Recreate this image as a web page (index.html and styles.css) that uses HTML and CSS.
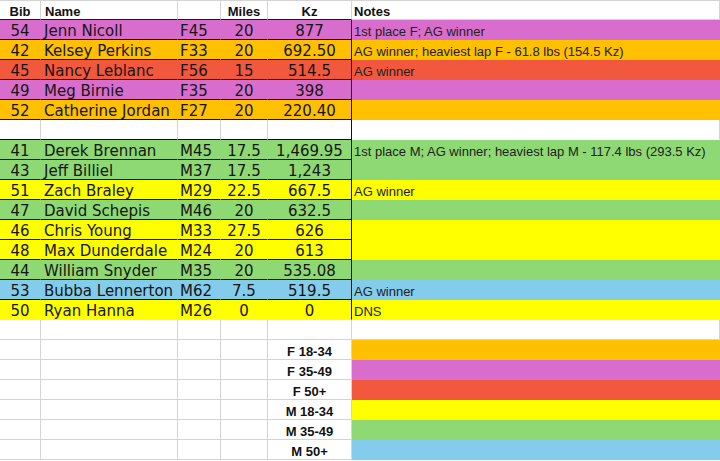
FILE: index.html
```html
<!DOCTYPE html>
<html lang="en">
<head>
<meta charset="utf-8">
<title>Race results</title>
<link rel="stylesheet" href="styles.css">
</head>
<body>
<div class="sheet">
  <div class="row head">
    <div class="cell bib">Bib</div><div class="cell name">Name</div><div class="cell age"></div><div class="cell num">Miles</div><div class="cell kz">Kz</div><div class="cell note">Notes</div>
  </div>

  <div class="row data mag">
    <div class="cell bib">54</div><div class="cell name">Jenn Nicoll</div><div class="cell age">F45</div><div class="cell num">20</div><div class="cell kz">877</div><div class="cell note">1st place F; AG winner</div>
  </div>
  <div class="row data org">
    <div class="cell bib">42</div><div class="cell name">Kelsey Perkins</div><div class="cell age">F33</div><div class="cell num">20</div><div class="cell kz">692.50</div><div class="cell note">AG winner; heaviest lap F - 61.8 lbs (154.5 Kz)</div>
  </div>
  <div class="row data red">
    <div class="cell bib">45</div><div class="cell name">Nancy Leblanc</div><div class="cell age">F56</div><div class="cell num">15</div><div class="cell kz">514.5</div><div class="cell note">AG winner</div>
  </div>
  <div class="row data mag">
    <div class="cell bib">49</div><div class="cell name">Meg Birnie</div><div class="cell age">F35</div><div class="cell num">20</div><div class="cell kz">398</div><div class="cell note"></div>
  </div>
  <div class="row data org">
    <div class="cell bib">52</div><div class="cell name">Catherine Jordan</div><div class="cell age">F27</div><div class="cell num">20</div><div class="cell kz">220.40</div><div class="cell note"></div>
  </div>

  <div class="row gap">
    <div class="cell bib"></div><div class="cell name"></div><div class="cell age"></div><div class="cell num"></div><div class="cell kz"></div><div class="cell note"></div>
  </div>

  <div class="row data grn">
    <div class="cell bib">41</div><div class="cell name">Derek Brennan</div><div class="cell age">M45</div><div class="cell num">17.5</div><div class="cell kz">1,469.95</div><div class="cell note">1st place M; AG winner; heaviest lap M - 117.4 lbs (293.5 Kz)</div>
  </div>
  <div class="row data grn">
    <div class="cell bib">43</div><div class="cell name">Jeff Billiel</div><div class="cell age">M37</div><div class="cell num">17.5</div><div class="cell kz">1,243</div><div class="cell note"></div>
  </div>
  <div class="row data yel">
    <div class="cell bib">51</div><div class="cell name">Zach Braley</div><div class="cell age">M29</div><div class="cell num">22.5</div><div class="cell kz">667.5</div><div class="cell note">AG winner</div>
  </div>
  <div class="row data grn">
    <div class="cell bib">47</div><div class="cell name">David Schepis</div><div class="cell age">M46</div><div class="cell num">20</div><div class="cell kz">632.5</div><div class="cell note"></div>
  </div>
  <div class="row data yel">
    <div class="cell bib">46</div><div class="cell name">Chris Young</div><div class="cell age">M33</div><div class="cell num">27.5</div><div class="cell kz">626</div><div class="cell note"></div>
  </div>
  <div class="row data yel">
    <div class="cell bib">48</div><div class="cell name">Max Dunderdale</div><div class="cell age">M24</div><div class="cell num">20</div><div class="cell kz">613</div><div class="cell note"></div>
  </div>
  <div class="row data grn">
    <div class="cell bib">44</div><div class="cell name">William Snyder</div><div class="cell age">M35</div><div class="cell num">20</div><div class="cell kz">535.08</div><div class="cell note"></div>
  </div>
  <div class="row data blu">
    <div class="cell bib">53</div><div class="cell name">Bubba Lennerton</div><div class="cell age">M62</div><div class="cell num">7.5</div><div class="cell kz">519.5</div><div class="cell note">AG winner</div>
  </div>
  <div class="row data yel last">
    <div class="cell bib">50</div><div class="cell name">Ryan Hanna</div><div class="cell age">M26</div><div class="cell num">0</div><div class="cell kz">0</div><div class="cell note">DNS</div>
  </div>

  <div class="row plain">
    <div class="cell bib"></div><div class="cell name"></div><div class="cell age"></div><div class="cell num"></div><div class="cell kz"></div><div class="cell note"></div>
  </div>

  <div class="row legend org">
    <div class="cell bib"></div><div class="cell name"></div><div class="cell age"></div><div class="cell num"></div><div class="cell kz">F 18-34</div><div class="cell note"></div>
  </div>
  <div class="row legend mag">
    <div class="cell bib"></div><div class="cell name"></div><div class="cell age"></div><div class="cell num"></div><div class="cell kz">F 35-49</div><div class="cell note"></div>
  </div>
  <div class="row legend red">
    <div class="cell bib"></div><div class="cell name"></div><div class="cell age"></div><div class="cell num"></div><div class="cell kz">F 50+</div><div class="cell note"></div>
  </div>
  <div class="row legend yel">
    <div class="cell bib"></div><div class="cell name"></div><div class="cell age"></div><div class="cell num"></div><div class="cell kz">M 18-34</div><div class="cell note"></div>
  </div>
  <div class="row legend grn">
    <div class="cell bib"></div><div class="cell name"></div><div class="cell age"></div><div class="cell num"></div><div class="cell kz">M 35-49</div><div class="cell note"></div>
  </div>
  <div class="row legend blu">
    <div class="cell bib"></div><div class="cell name"></div><div class="cell age"></div><div class="cell num"></div><div class="cell kz">M 50+</div><div class="cell note"></div>
  </div>
</div>
</body>
</html>
```

FILE: styles.css
```css
html, body {
  margin: 0;
  padding: 0;
  background: #ffffff;
}

.sheet {
  width: 720px;
  font-family: "Liberation Sans", Arial, sans-serif;
  color: #1a1a1a;
}

.row {
  display: grid;
  grid-template-columns: 41px 137px 43px 47px 84px 368px;
  height: 20px;
}

.cell {
  box-sizing: border-box;
  height: 20px;
  border-right: 1px solid #d4d4d4;
  border-bottom: 1px solid #d4d4d4;
  white-space: nowrap;
  overflow: visible;
  font-size: 13px;
  line-height: 23px;
}

.bib { text-align: center; }
.name { padding-left: 3px; }
.age { padding-left: 2px; }
.num, .kz { text-align: center; }
.note { padding-left: 2px; }

/* header */
.head .cell {
  border-top: 1px solid #d4d4d4;
  font-weight: bold;
  line-height: 21px;
  color: #111;
}
.head .name { padding-left: 4px; }
.head .cell.kz { border-bottom-color: #1a1a1a; }
.head .bib, .head .name, .head .age, .head .num { border-bottom-color: #1a1a1a; }

/* data rows */
.data .cell {
  font-family: "DejaVu Sans", Verdana, sans-serif;
  font-size: 15px;
  line-height: 22px;
  color: #151515;
  border-bottom-color: #111;
  border-right-color: transparent;
}
.data .kz { border-right-color: #111; }
.data .note {
  font-family: "Liberation Sans", Arial, sans-serif;
  font-size: 13px;
  line-height: 23px;
  color: #222;
  border-bottom-color: transparent;
  border-right-color: transparent;
}
.data.last .cell { border-bottom-color: transparent; }
.data.last .kz { border-right-color: #111; }

/* separator between groups */
.gap .bib, .gap .name, .gap .age, .gap .num, .gap .kz { border-bottom-color: #111; }
.gap .kz { border-right-color: #111; }
.gap .note { border-bottom-color: transparent; }

/* legend */
.legend .kz {
  font-weight: bold;
  line-height: 23px;
  color: #111;
}
.legend .note {
  border-bottom-color: transparent;
  border-right-color: transparent;
}

/* colours */
.mag .bib, .mag .name, .mag .age, .mag .num, .mag .kz, .mag .note { background: #d86dcd; }
.org .bib, .org .name, .org .age, .org .num, .org .kz, .org .note { background: #ffc000; }
.red .bib, .red .name, .red .age, .red .num, .red .kz, .red .note { background: #f2583e; }
.yel .bib, .yel .name, .yel .age, .yel .num, .yel .kz, .yel .note { background: #ffff00; }
.grn .bib, .grn .name, .grn .age, .grn .num, .grn .kz, .grn .note { background: #8ed973; }
.blu .bib, .blu .name, .blu .age, .blu .num, .blu .kz, .blu .note { background: #83cceb; }

.legend.mag .bib, .legend.mag .name, .legend.mag .age, .legend.mag .num, .legend.mag .kz,
.legend.org .bib, .legend.org .name, .legend.org .age, .legend.org .num, .legend.org .kz,
.legend.red .bib, .legend.red .name, .legend.red .age, .legend.red .num, .legend.red .kz,
.legend.yel .bib, .legend.yel .name, .legend.yel .age, .legend.yel .num, .legend.yel .kz,
.legend.grn .bib, .legend.grn .name, .legend.grn .age, .legend.grn .num, .legend.grn .kz,
.legend.blu .bib, .legend.blu .name, .legend.blu .age, .legend.blu .num, .legend.blu .kz {
  background: #ffffff;
}
```
